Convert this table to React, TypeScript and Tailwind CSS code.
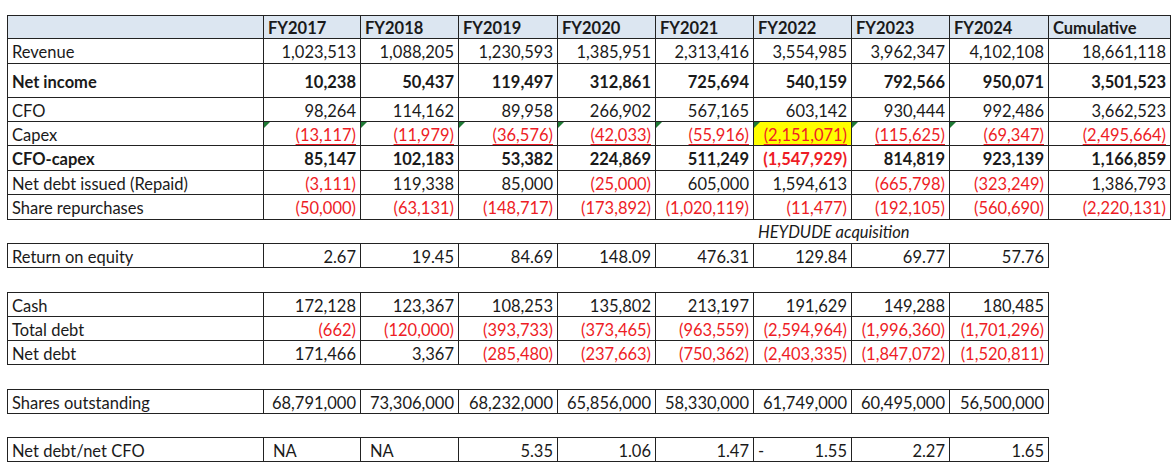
import React from 'react';
import { clsx } from 'clsx';

type Row = {
  label: string;
  values: string[];
  bold?: boolean;
  height: string;
  underline?: boolean;
  flags?: boolean;
};

const cols10 = 'grid-cols-[256px_97px_98px_99px_98px_98px_98px_98px_99px_122px]';
const cols9 = 'grid-cols-[256px_97px_98px_99px_98px_98px_98px_98px_99px]';

const headers = ['FY2017', 'FY2018', 'FY2019', 'FY2020', 'FY2021', 'FY2022', 'FY2023', 'FY2024', 'Cumulative'];

const mainRows: Row[] = [
  { label: 'Revenue', height: 'h-[25px]', values: ['1,023,513', '1,088,205', '1,230,593', '1,385,951', '2,313,416', '3,554,985', '3,962,347', '4,102,108', '18,661,118'] },
  { label: 'Net income', height: 'h-[34px]', bold: true, values: ['10,238', '50,437', '119,497', '312,861', '725,694', '540,159', '792,566', '950,071', '3,501,523'] },
  { label: 'CFO', height: 'h-[24px]', values: ['98,264', '114,162', '89,958', '266,902', '567,165', '603,142', '930,444', '992,486', '3,662,523'] },
  { label: 'Capex', height: 'h-[24px]', underline: true, flags: true, values: ['(13,117)', '(11,979)', '(36,576)', '(42,033)', '(55,916)', '(2,151,071)', '(115,625)', '(69,347)', '(2,495,664)'] },
  { label: 'CFO-capex', height: 'h-[25px]', bold: true, values: ['85,147', '102,183', '53,382', '224,869', '511,249', '(1,547,929)', '814,819', '923,139', '1,166,859'] },
  { label: 'Net debt issued (Repaid)', height: 'h-[24px]', values: ['(3,111)', '119,338', '85,000', '(25,000)', '605,000', '1,594,613', '(665,798)', '(323,249)', '1,386,793'] },
  { label: 'Share repurchases', height: 'h-[25px]', values: ['(50,000)', '(63,131)', '(148,717)', '(173,892)', '(1,020,119)', '(11,477)', '(192,105)', '(560,690)', '(2,220,131)'] },
];

const roeRow: Row = { label: 'Return on equity', height: 'h-[24px]', values: ['2.67', '19.45', '84.69', '148.09', '476.31', '129.84', '69.77', '57.76'] };

const debtRows: Row[] = [
  { label: 'Cash', height: 'h-[24px]', values: ['172,128', '123,367', '108,253', '135,802', '213,197', '191,629', '149,288', '180,485'] },
  { label: 'Total debt', height: 'h-[24px]', values: ['(662)', '(120,000)', '(393,733)', '(373,465)', '(963,559)', '(2,594,964)', '(1,996,360)', '(1,701,296)'] },
  { label: 'Net debt', height: 'h-[24px]', values: ['171,466', '3,367', '(285,480)', '(237,663)', '(750,362)', '(2,403,335)', '(1,847,072)', '(1,520,811)'] },
];

const sharesRow: Row = { label: 'Shares outstanding', height: 'h-[24px]', values: ['68,791,000', '73,306,000', '68,232,000', '65,856,000', '58,330,000', '61,749,000', '60,495,000', '56,500,000'] };

// little green "error" marker excel puts in the corner
function Flag() {
  return (
    <span className="absolute left-0 top-0 w-0 h-0 border-t-[6px] border-t-[#1f7a35] border-r-[6px] border-r-transparent" />
  );
}

function DataRow({ row, cols }: { row: Row; cols: string }) {
  return (
    <div className={clsx('grid', cols, row.height)}>
      <div className={clsx('flex items-center pt-[2px] pl-[4px] border-r border-b border-[#222]', row.bold && 'font-bold')}>
        {row.label}
      </div>
      {row.values.map((v, i) => {
        const neg = v.startsWith('(');
        const yellow = row.underline && i === 5;
        return (
          <div
            key={i}
            className={clsx(
              'relative flex items-center justify-end pt-[2px] pr-[4px] border-r border-b border-[#222]',
              row.bold && 'font-bold',
              neg && 'text-[#ee1c25]',
              yellow && 'bg-[#ffff00]'
            )}
          >
            {row.flags && i < 8 && <Flag />}
            <span className={clsx(row.underline && 'underline underline-offset-[3px] decoration-1')}>{v}</span>
          </div>
        );
      })}
    </div>
  );
}

function Block({ rows, cols, className }: { rows: Row[]; cols: string; className?: string }) {
  return (
    <div className={clsx('w-fit border-l border-t border-[#222]', className)}>
      {rows.map(r => (
        <DataRow key={r.label} row={r} cols={cols} />
      ))}
    </div>
  );
}

export default function App() {
  const ratio = ['NA', 'NA', '5.35', '1.06', '1.47', '1.55', '2.27', '1.65'];

  return (
    <div className="w-[1175px] h-[466px] bg-white text-[#1a1a1a] text-[16.5px] leading-[20px] pt-[15px] pl-[7px] overflow-hidden" style={{ fontFamily: 'Lato, "Open Sans", sans-serif' }}>
      <div className="w-fit border-l border-t border-[#222]">
        <div className={clsx('grid h-[23px] bg-[#dce6f1] font-bold', cols10)}>
          <div className="border-r border-b border-[#222]" />
          {headers.map(h => (
            <div key={h} className="flex items-center pt-[1px] pl-[4px] border-r border-b border-[#222]">
              {h}
            </div>
          ))}
        </div>
        {mainRows.map(r => (
          <DataRow key={r.label} row={r} cols={cols10} />
        ))}
      </div>

      <div className={clsx('grid h-[23px]', cols10)}>
        <div className="col-start-7 col-span-3 flex items-center pl-[5px] italic whitespace-nowrap">HEYDUDE acquisition</div>
      </div>

      <Block rows={[roeRow]} cols={cols9} />
      <Block rows={debtRows} cols={cols9} className="mt-[24px]" />
      <Block rows={[sharesRow]} cols={cols9} className="mt-[24px]" />

      <div className="mt-[23px] w-fit border-l border-t border-[#222]">
        <div className={clsx('grid h-[24px]', cols9)}>
          <div className="flex items-center pt-[2px] pl-[4px] border-r border-b border-[#222]">Net debt/net CFO</div>
          {ratio.map((v, i) => (
            <div
              key={i}
              className={clsx(
                'flex items-center pt-[2px] border-r border-b border-[#222]',
                v === 'NA' ? 'pl-[9px]' : 'justify-between pl-[4px] pr-[4px]'
              )}
            >
              {v !== 'NA' && <span>{i === 5 ? '-' : ''}</span>}
              <span>{v}</span>
            </div>
          ))}
        </div>
      </div>
    </div>
  );
}
